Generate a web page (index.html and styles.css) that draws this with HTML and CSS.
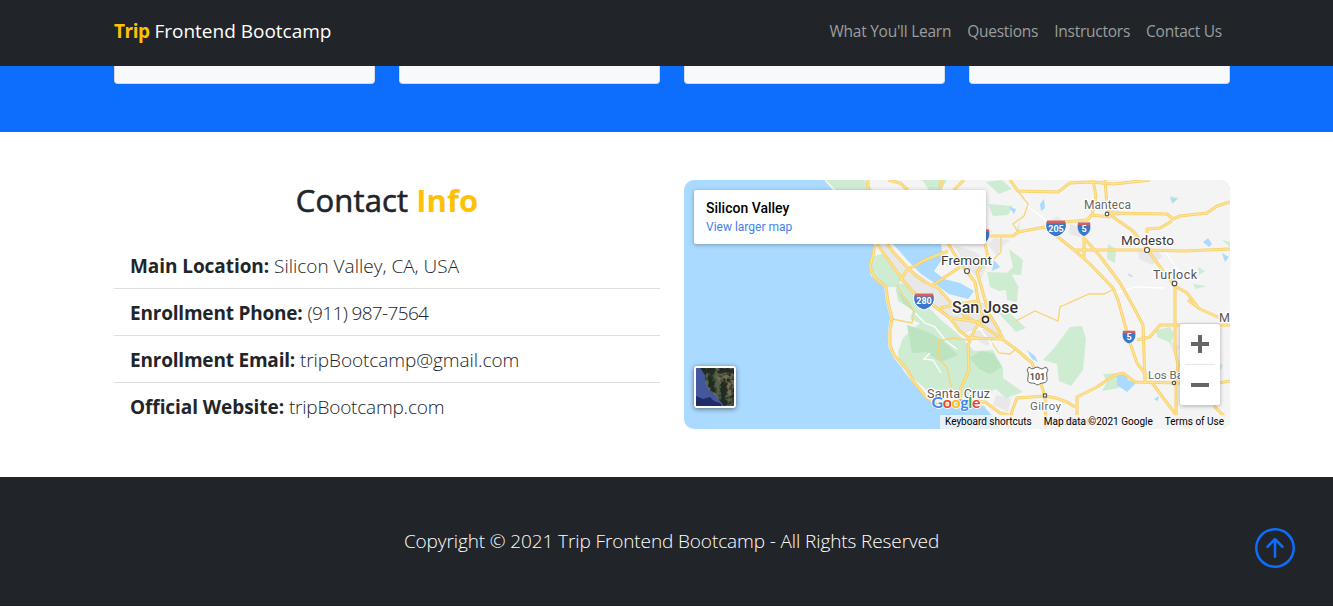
FILE: index.html
```html
<!DOCTYPE html>
<html lang="en">
<head>
<meta charset="utf-8">
<title>Trip Frontend Bootcamp</title>
<link rel="stylesheet" href="styles.css">
</head>
<body>
<header class="navbar">
  <div class="container navbar-inner">
    <a class="brand"><b>Trip</b> <span class="brand-name">Frontend Bootcamp</span></a>
    <nav class="nav"><a>What You'll Learn</a><a>Questions</a><a>Instructors</a><a>Contact Us</a></nav>
  </div>
</header>
<section class="instructors">
  <div class="container cards"><div class="card"></div><div class="card"></div><div class="card"></div><div class="card"></div></div>
</section>
<section class="contact">
  <div class="container contact-grid">
    <div class="info">
      <h2><span class="t-contact">Contact</span> <span class="t-info">Info</span></h2>
      <ul class="list">
        <li><b class="tight">Main Location:</b> <span>Silicon Valley, CA, USA</span></li>
        <li><b class="tighter">Enrollment Phone:</b> <span class="phone">(911) 987-7564</span></li>
        <li><b class="tighter">Enrollment Email:</b> <span class="tight">tripBootcamp@gmail.com</span></li>
        <li><b class="tight">Official Website:</b> <span class="tighter">tripBootcamp.com</span></li>
      </ul>
    </div>
    <div class="map">
      <svg class="map-canvas" viewBox="0 0 546 249" width="546" height="249">
        <defs>
          <g id="shield"><path d="M-10 -5C-8 -7 -6 -7 -4 -6C-2 -7 2 -7 4 -6C6 -7 8 -7 10 -5C12 4 6 8 0 10C-6 8 -12 4 -10 -5Z" fill="#3b78c9" stroke="#fff" stroke-width="1"/><path d="M-9 -6.500L9 -6.500L9.500 -3.500H-9.500Z" fill="#d8605a"/></g>
          <g id="highways">
            <path d="M302 56H329L334 52L361 47L381 42L403 40L408 35L426 37"/>
            <path d="M409 0L412 16L408 35L400 43V79"/>
            <path d="M421 0L423 26L429 37L449 51L463 69L479 91L491 106L503 113L513 126"/>
            <path d="M361 47L389 69L406 84L429 108L434 120L446 163L453 183L466 200L486 227L503 249"/>
            <path d="M401 59L416 76L436 103L449 126L459 145L461 202"/>
            <path d="M389 70H463L500 71L546 69"/>
            <path d="M426 33L483 34L489 39L496 36L523 33L533 26L546 22"/>
            <path d="M326 0L334 11L374 12L386 3L406 2L430 4L466 0"/>
            <path d="M463 53V49L476 48L488 41"/>
            <path d="M453 160L466 157L476 145H546"/>
            <path d="M491 106V170L494 185L492 200V235"/>
            <path d="M504 120L516 129L536 138L546 139M530 226L540 236"/>
            <path d="M393 249V217L413 207L429 196L439 193L451 202L496 203H535L546 201"/>
            <path d="M361 216L372 218L383 222L391 227"/>
            <path d="M203 64L210 73L221 85L231 95L241 102L254 108L269 125L283 137L302 148L318 159L333 170L348 183L358 207L361 217L362 249"/>
            <path d="M193 64L208 85L219 100L229 112L249 125L266 138L275 150L285 158L318 159"/>
            <path d="M262 60L276 83L291 102L294 120L299 137L291 149L284 165L285 190L276 210V220"/>
            <path d="M301 64L304 77L293 92L299 113L305 134L313 147L319 159"/>
            <path d="M264 71L241 80L223 90L216 101M249 105L276 87"/>
            <path d="M256 128L275 124L293 121M266 138L295 142L305 135M279 139L293 125M285 158L293 158"/>
            <path d="M361 216L333 218L328 231L325 249"/>
            <path d="M184 0V10M204 0L216 3L224 10M258 0L256 10M280 0L270 10"/>
            <path d="M191 65L189 75L186 86L190 97L202 107L204 122L208 138L206 150L206 165L210 175L222 188L230 202L242 217L255 226L276 221L301 222L316 233L325 235"/>
          </g>
        </defs>
        <rect width="546" height="249" fill="#aadaff"/>
        <path d="M140 0L149 10L178 45L190 64L190 72L185 86L187 96L200 107L202 122L206 138L204 150L204 166L209 177L218 188L219 190L229 203L241 217L253 226L270 222L285 223L300 226L308 236L315 249H546V0Z" fill="#f4f4f4"/>
        <g fill="#e8e8e8">
          <path d="M192 64L204 65L220 84L245 102L266 121L300 123L318 151L303 166L279 151L238 118L214 98Z"/><path d="M270 65L291 72L304 83L296 102L280 82ZM310 58L326 60L317 68L313 76L304 65ZM386 44L400 48L398 58L385 54ZM454 69L474 70L478 77L468 85L455 79ZM361 44L374 36L381 46ZM312 215L327 218L324 232L309 225ZM484 160L496 166L491 176ZM416 20L430 22L437 35L425 39Z"/>
        </g>
        <g fill="#cdecd1">
          <path d="M142 0H181L188 10H152ZM238 0H263L257 10H245ZM190 76L201 73L212 91L219 96L213 107L201 107L188 96L187 84ZM211 104L223 103L229 112L239 122L256 139L275 155L290 171L309 170L319 188L319 198L339 212L322 218L312 209L290 217L264 217L246 213L228 197L216 185L214 172L219 158L236 143L226 139L229 130L214 121Z"/>
          <path d="M371 167L386 147L398 146L402 159L399 190L387 206L375 201L373 184L359 180ZM419 194L438 193L435 208L418 211L423 202ZM310 128L321 129L342 148L332 152ZM472 150L486 147L490 154L487 163L473 157ZM304 24L329 26L324 35L309 36ZM302 2L318 0L328 9L315 14ZM333 49L336 40L334 58ZM424 64L432 69L431 83L423 79ZM325 69L339 80L337 95L322 94L329 87ZM303 92L327 93L335 108L315 111L306 107ZM322 110L334 108L333 122L323 120ZM486 16L495 18L488 24ZM538 60L546 62V67ZM509 104L522 106L512 109ZM514 87L521 91L515 95ZM531 181L539 185L537 190Z"/>
        </g>
        <path d="M223 145L242 151L258 160L274 175L257 182L242 172L228 173ZM286 178L296 171L309 173L318 187L306 194L295 189ZM212 110L224 120L232 133L220 124Z" fill="#bce4c1"/>
        <path d="M209 64H257L259 78L250 91L260 99L276 103L290 111L284 119L265 114L249 102L237 94L226 83ZM310 80L316 87L308 91ZM356 24L360 19L361 28L357 31ZM325 27L332 29L330 34ZM343 170L351 176L354 182L348 179ZM433 195L442 194L444 200L452 203L449 206L443 212L433 205ZM519 62L524 58L528 64L525 67ZM538 73L545 77L541 82ZM444 93L450 97L445 96ZM470 219L475 216L474 221ZM486 18L493 19L489 23Z" fill="#aadaff"/>
        <path class="minor" d="M231 133L241 143L251 147L262 161L273 169M340 23L369 46M246 173L240 179L249 180L257 193M431 113L452 107L480 108M481 71L493 89L503 99M293 145L309 166M278 155L299 148"/>
        <path class="local" d="M334 11L344 24L340 36L329 44L334 52M317 57V72L310 79M208 139L228 143L230 132L222 119M284 160L269 158L254 161L255 178L263 188L268 210M332 141L351 131L374 141L376 127L405 114L420 114L430 109M308 163L315 173L326 174L332 169M213 105L221 119"/>
        <use href="#highways" class="road-edge"/><use href="#highways" class="road-fill"/>
        <use href="#shield" x="240" y="120"/><use href="#shield" x="372" y="47"/><use href="#shield" transform="translate(400 48) scale(.66 .85)"/><use href="#shield" transform="translate(445 156) scale(.66 .8)"/><use href="#shield" transform="translate(299 55) scale(.66 .85)"/>
        <path d="M345 187L348 189L353 187L358 189L362 187L364 190C360 195 367 202 359 203C356 203 355 205 353 205C351 203 349 203 347 203C340 202 347 195 343 190Z" fill="#fff" stroke="#666" stroke-width="1"/>
        <g class="shield-text"><text x="240" y="124">280</text><text x="372" y="51.500">205</text><text x="400" y="52">5</text><text x="445" y="160">5</text><text x="353.500" y="199.500" fill="#555">101</text></g>
        <g fill="#fff" stroke="#555" stroke-width="1.200"><circle cx="283" cy="91" r="2.500"/><circle cx="301.500" cy="139.500" r="3" stroke="#222" stroke-width="1.500"/><circle cx="463" cy="70" r="2.500"/><circle cx="423" cy="34" r="1.800"/><circle cx="490.500" cy="103.500" r="2.300"/><rect x="359.500" y="214" width="3" height="3"/><circle cx="490" cy="203" r="1.700"/><circle cx="276" cy="222" r="2"/></g>
        <g class="place">
          <text x="257" y="85" textLength="51" class="city">Fremont</text><text x="268" y="133" textLength="66" class="major">San Jose</text>
          <text x="400" y="29" textLength="47">Manteca</text><text x="437" y="65" textLength="53" class="city">Modesto</text><text x="469" y="99" textLength="44" class="town">Turlock</text>
          <text x="243" y="218" textLength="63" class="town">Santa Cruz</text><text x="346" y="230" textLength="31" class="small">Gilroy</text><text x="464" y="199" class="small">Los Banos</text><text x="535" y="142" class="town">Merced</text><text x="369" y="245" class="small">Hollister</text>
        </g>
        <text class="google" x="247.500" y="228" textLength="49"><tspan fill="#4285f4">G</tspan><tspan fill="#ea4335">o</tspan><tspan fill="#fbbc05">o</tspan><tspan fill="#4285f4">g</tspan><tspan fill="#34a853">l</tspan><tspan fill="#ea4335">e</tspan></text>
      </svg>
      <div class="place-card"><strong>Silicon Valley</strong><a>View larger map</a></div>
      <svg class="satellite" viewBox="0 0 38 38">
        <defs><filter id="terrain" x="0" y="0" width="100%" height="100%" color-interpolation-filters="sRGB"><feTurbulence type="fractalNoise" baseFrequency=".16" numOctaves="4" seed="6"/><feColorMatrix values="0 0 0 0 .13  0 0 0 0 .17  0 0 0 0 .13  5 0 0 0 -2"/></filter></defs>
        <rect width="38" height="38" fill="#716b54"/><path d="M5 0H20L38 23V38H29L10 14Z" fill="#53604a"/><path d="M20 8L36 15L34 30L27 20Z" fill="#7d6d50"/>
        <rect width="38" height="38" filter="url(#terrain)"/>
        <path d="M0 0H4L9 7V14L13 22L20 28L28 38H0Z" fill="#43589c"/><path d="M0 28L7 31L14 29L18 33L24 35L26 38H0Z" fill="#1f2c68"/>
      </svg>
      <div class="zoom">
        <svg viewBox="0 0 40 40"><path d="M11 20H29M20 11V29"/></svg>
        <svg viewBox="0 0 40 40"><path d="M11 20H29"/></svg>
      </div>
      <div class="credits"><span>Keyboard shortcuts</span><span>Map data ©2021 Google</span><span>Terms of Use</span></div>
    </div>
  </div>
</section>
<footer class="footer">
  <p>Copyright © 2021 Trip Frontend Bootcamp - All Rights Reserved</p>
  <a class="to-top"><svg viewBox="0 0 16 16" width="40" height="40"><path fill-rule="evenodd" d="M1 8a7 7 0 1 0 14 0A7 7 0 0 0 1 8zm15 0A8 8 0 1 1 0 8a8 8 0 0 1 16 0zm-7.500 3.500a.5.5 0 0 1-1 0V5.707L5.354 7.854a.5.5 0 1 1-.708-.708l3-3a.5.5 0 0 1 .708 0l3 3a.5.5 0 0 1-.708.708L8.500 5.707V11.500z"/></svg></a>
</footer>
</body>
</html>
```
FILE: styles.css
```css
* { box-sizing: border-box; }
body { margin: 0; height: 606px; overflow: hidden; display: flex; flex-direction: column; background: #fff; color: #212529; font-family: "Open Sans", "Noto Sans", sans-serif; }
.container { width: 1116px; margin-left: 114px; }
.navbar { height: 66px; background: #212529; }
.navbar-inner { height: 62px; display: flex; justify-content: space-between; align-items: center; }
.brand { color: #fff; font-size: 19px; white-space: nowrap; }
.brand b { color: #ffc107; letter-spacing: -.5px; }
.brand-name { letter-spacing: 0; }
.nav { display: flex; gap: 16px; padding: 0 8px 1px 0; color: #9b9d9e; font-size: 15.500px; letter-spacing: -.25px; white-space: nowrap; }
.instructors { height: 66px; background: #0d6efd; }
.cards { display: grid; grid-template-columns: repeat(4, 1fr); gap: 24px; }
.card { height: 18px; background: #f8f9fa; border: 1px solid #d4dae0; border-top: 0; border-radius: 0 0 4px 4px; }
.contact { height: 345px; padding-top: 48px; }
.contact-grid { display: grid; grid-template-columns: 546px 546px; gap: 24px; }
h2 { margin: 0; height: 62px; font-size: 31px; line-height: 40px; font-weight: 500; text-align: center; white-space: nowrap; }
.t-contact { -webkit-text-stroke: .6px #212529; letter-spacing: .15px; }
.t-info { color: #ffc107; font-weight: 700; }
.list { list-style: none; margin: 0; padding: 0; font-size: 19px; font-weight: 300; white-space: nowrap; }
.list li { height: 47px; padding: 9px 16px 7px; line-height: 30px; border-bottom: 1px solid #dfdfdf; }
.list li:last-child { border-bottom: 0; }
.list b { font-weight: 700; }
.list .tight { letter-spacing: -.07px; }
.list .tighter { letter-spacing: -.2px; }
.list .phone { letter-spacing: -.65px; }
.map { position: relative; width: 546px; height: 249px; border-radius: 10px; overflow: hidden; font-family: Roboto, sans-serif; }
.map-canvas { display: block; }
.road-edge { fill: none; stroke: #f7cf69; stroke-width: 3; stroke-linejoin: round; }
.road-fill { fill: none; stroke: #ffe391; stroke-width: 1.400; stroke-linejoin: round; }
.minor { fill: none; stroke: #fff; stroke-width: 1.300; }
.local { fill: none; stroke: #f8d477; stroke-width: 1.300; }
.shield-text { font: 700 9px Roboto, sans-serif; text-anchor: middle; fill: #fff; }
.place { font-size: 12px; fill: #666; stroke: #fff; stroke-width: 2.500px; paint-order: stroke; stroke-linejoin: round; }
.city { font-size: 13.500px; fill: #383838; }
.major { font-size: 16px; font-weight: 500; fill: #333; }
.town { font-size: 12.500px; fill: #555; }
.small { font-size: 11.500px; }
.google { font: 700 16px Lato, sans-serif; stroke: #fff; stroke-width: 1.500px; paint-order: stroke; }
.place-card { position: absolute; left: 10px; top: 10px; width: 292px; height: 54px; padding: 10px 12px; display: flex; flex-direction: column; background: #fff; border-radius: 2px; box-shadow: 0 1px 4px rgba(0,0,0,.3); }
.place-card strong { font-size: 14px; line-height: 17px; font-weight: 500; color: #000; }
.place-card a { font-size: 12px; line-height: 20px; color: #427fed; }
.satellite { position: absolute; left: 10px; top: 186px; width: 42px; height: 42px; border: 2px solid #fff; border-radius: 3px; background: #fff; box-shadow: 0 1px 5px rgba(0,0,0,.5); }
.zoom { position: absolute; left: 496px; top: 144px; width: 40px; height: 81px; padding: 0 5px; display: flex; flex-direction: column; background: #fff; border-radius: 2px; box-shadow: 0 1px 4px rgba(0,0,0,.3); }
.zoom svg { width: 40px; height: 40px; margin-left: -5px; stroke: #666; stroke-width: 4; }
.zoom svg:last-child { width: 30px; height: 41px; margin: 0; border-top: 1px solid #e6e6e6; stroke-width: 5.330; }
.zoom svg:last-child path { transform: translate(20px, 20px) scale(1.333, 1) translate(-20px, -20px); }
.credits { position: absolute; right: 0; bottom: 0; width: 290px; height: 14px; padding: 0 6px 0 5px; display: flex; justify-content: space-between; background: rgba(245,245,245,.8); color: #000; font-size: 10px; line-height: 14px; white-space: nowrap; }
.footer { position: relative; height: 129px; background: #212529; color: #fff; border-bottom: 1px solid #1b1e22; }
.footer p { margin: 49px 0 0 10px; text-align: center; font-size: 19px; line-height: 30px; font-weight: 300; letter-spacing: -.11px; white-space: nowrap; }
.to-top { position: absolute; left: 1255px; top: 51px; }
.to-top svg { display: block; fill: #0d6efd; }
```
